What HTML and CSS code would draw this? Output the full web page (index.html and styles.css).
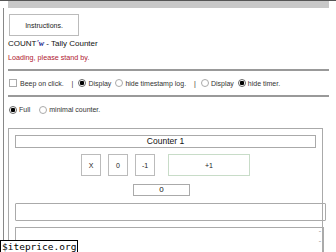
FILE: index.html
```html
<!DOCTYPE html>
<html lang="en">
<head>
  <meta charset="UTF-8" />
  <title>COUNT'w - Tally Counter</title>
  <link rel="stylesheet" href="styles.css">
</head>
<body>
  <div class="topbar"><div class="topbar-fill"></div></div>

  <div class="page">
    <button class="instructions">Instructions.</button>
    <h1 class="title">COUNT<span class="brand">'w</span> - Tally Counter</h1>
    <p class="loading">Loading, please stand by.</p>

    <hr class="rule first" />
    <div class="options">
      <label><span class="box"></span>Beep on click.</label>
      <span class="sep">|</span>
      <label><span class="radio on"></span>Display</label>
      <label><span class="radio"></span>hide timestamp log.</label>
      <span class="sep">|</span>
      <label><span class="radio"></span>Display</label>
      <label><span class="radio on"></span>hide timer.</label>
    </div>
    <hr class="rule" />
    <div class="options mode">
      <label><span class="radio on"></span>Full</label>
      <label><span class="radio"></span>minimal counter.</label>
    </div>

    <section class="counter">
      <div class="counter-name">Counter 1</div>
      <div class="counter-buttons">
        <button class="btn">X</button>
        <button class="btn">0</button>
        <button class="btn">-1</button>
        <button class="btn plus">+1</button>
      </div>
      <div class="count">0</div>
      <div class="log"></div>
      <div class="timer"><span class="scroll">&#710;<br>&#711;</span></div>
    </section>
  </div>

  <div class="watermark">$iteprice.org</div>
</body>
</html>
```

FILE: styles.css
```css
body {
  margin: 0;
  font-family: 'Liberation Sans', Arial, sans-serif;
  background: #fff;
  color: #111;
  height: 252px;
  overflow: hidden;
}

.topbar {
  border-top: 1px solid #555;
  height: 7px;
  padding: 0 7px 0 8px;
}

.topbar-fill {
  background: #c8c8c8;
  height: 7px;
}

.page {
  margin-left: 3px;
  border-left: 1px solid #888;
  padding: 6px 0 0 4px;
  height: 260px;
}

.instructions {
  display: block;
  width: 70px;
  height: 22px;
  margin-left: 1px;
  background: #fff;
  border: 1px solid #bbb;
  font-family: inherit;
  font-size: 7px;
  color: #222;
  padding: 0;
}

.title {
  font-size: 8px;
  font-weight: normal;
  margin: 2px 0 0 0;
  line-height: 12px;
}

.brand {
  color: #1a1a8a;
  font-style: italic;
  font-weight: bold;
  font-family: 'Liberation Serif', serif;
}

.loading {
  color: #b02030;
  font-size: 7.2px;
  margin: 3px 0 0 0;
  line-height: 10px;
}

.rule {
  width: 321px;
  margin: 0;
  border: none;
  border-top: 2px solid #999;
  height: 0;
}

.rule.first {
  margin-top: 6px;
}

.options {
  display: flex;
  align-items: center;
  font-size: 7px;
  color: #333;
  height: 24px;
  margin-left: 1px;
}

.options label {
  display: flex;
  align-items: center;
  margin-right: 4px;
}

.mode {
  height: 25px;
}

.mode label {
  margin-right: 9px;
}

.sep {
  margin: 0 5px 0 4px;
}

.box {
  width: 6px;
  height: 6px;
  border: 1px solid #aaa;
  margin-right: 3px;
}

.radio {
  width: 8px;
  height: 8px;
  border: 1px solid #aaa;
  border-radius: 50%;
  margin-right: 2px;
  box-sizing: border-box;
}

.radio.on {
  border-color: #666;
  background: radial-gradient(circle, #000 0 2px, #fff 2.5px);
}

.counter {
  margin-top: 6px;
  width: 307px;
  border: 1px solid #aaa;
  border-bottom: none;
  padding: 6px 0 0 6px;
  height: 130px;
}

.counter-name {
  width: 299px;
  height: 11px;
  border: 1px solid #aaa;
  text-align: center;
  font-size: 8.5px;
  line-height: 11px;
}

.counter-buttons {
  display: flex;
  gap: 7px;
  margin: 6px 0 0 66px;
}

.btn {
  width: 20px;
  height: 22px;
  border: 1px solid #bbb;
  background: #fff;
  font-family: inherit;
  font-size: 7px;
  color: #222;
  padding: 0;
}

.plus {
  width: 82px;
  margin-left: 6px;
  border-color: #c8dcc8;
}

.count {
  width: 55px;
  height: 10px;
  margin: 8px 0 0 118px;
  border: 1px solid #aaa;
  text-align: center;
  font-size: 8px;
  line-height: 10px;
}

.log {
  width: 309px;
  height: 16px;
  margin-top: 7px;
  border: 1px solid #aaa;
  border-radius: 1px;
}

.timer {
  position: relative;
  width: 307px;
  height: 30px;
  margin-top: 6px;
  border: 1px solid #aaa;
}

.scroll {
  position: absolute;
  right: 2px;
  top: 1px;
  font-size: 7px;
  line-height: 10px;
  color: #999;
}

.watermark {
  position: absolute;
  left: 0;
  top: 240px;
  background: #fff;
  border: 1px solid #000;
  font-family: 'DejaVu Sans Mono', monospace;
  font-size: 9.5px;
  line-height: 11px;
  padding: 0 1px;
  color: #000;
}
```
